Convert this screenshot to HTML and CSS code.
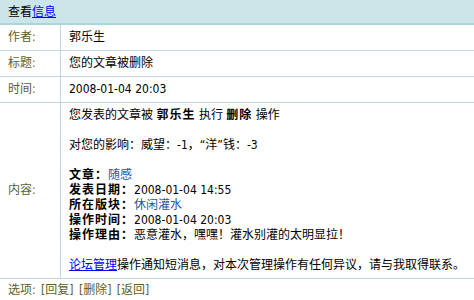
FILE: index.html
```html
<!DOCTYPE html>
<html lang="zh-CN">
<head>
<meta charset="utf-8">
<title>查看信息</title>
<link rel="stylesheet" href="styles.css">
</head>
<body>
<div class="box">
  <div class="head">查看<a href="#" class="lnk">信息</a></div>
  <table class="tbl">
    <tr>
      <td class="lab">作者:</td>
      <td class="val">郭乐生</td>
    </tr>
    <tr>
      <td class="lab">标题:</td>
      <td class="val">您的文章被删除</td>
    </tr>
    <tr>
      <td class="lab">时间:</td>
      <td class="val">2008-01-04 20:03</td>
    </tr>
    <tr>
      <td class="lab">内容:</td>
      <td class="val msg">您发表的文章被 <b>郭乐生</b> 执行 <b>删除</b> 操作<br><br>对您的影响：威望：-1，“洋”钱：-3<br><br><b>文章：</b><a href="#" class="ref">随感</a><br><b>发表日期：</b>2008-01-04 14:55<br><b>所在版块：</b><a href="#" class="ref">休闲灌水</a><br><b>操作时间：</b>2008-01-04 20:03<br><b>操作理由：</b>恶意灌水，嘿嘿！灌水别灌的太明显拉！<br><br><a href="#" class="lnk">论坛管理</a>操作通知短消息，对本次管理操作有任何异议，请与我取得联系。</td>
    </tr>
  </table>
  <div class="opts">选项: <a href="#" class="opt">[回复]</a> <a href="#" class="opt">[删除]</a> <a href="#" class="opt">[返回]</a></div>
</div>
</body>
</html>
```

FILE: styles.css
```css
html, body {
  margin: 0;
  padding: 0;
  background: #ffffff;
}

body {
  font-family: "DejaVu Sans Condensed", "DejaVu Sans", "Noto Sans CJK SC", sans-serif;
  font-stretch: condensed;
  font-size: 12px;
  color: #000000;
}

.box {
  width: 474px;
}

.head {
  height: 21px;
  padding: 2px 0 0 8px;
  line-height: 21px;
  background: #cce5e9;
  border-bottom: 2px solid #a7d7d9;
}

.lnk {
  color: #0000ff;
  text-decoration: underline;
}

.tbl {
  width: 100%;
  border-collapse: collapse;
  border-spacing: 0;
}

.tbl td {
  padding: 0 8px;
  border-bottom: 1px solid #c2d6e2;
  line-height: 15px;
}

.tbl b {
  letter-spacing: 1px;
}

.lab {
  width: 44px;
  height: 25px;
  color: #5b602c;
  border-right: 1px solid #c2d6e2;
  vertical-align: middle;
}

.val {
  height: 25px;
  vertical-align: middle;
}

.tbl td.msg {
  padding-top: 5px;
  padding-bottom: 5px;
  height: auto;
}

.ref {
  color: #2457a6;
  text-decoration: none;
}

.opts {
  padding: 4px 0 0 8px;
  line-height: 15px;
  color: #5b602c;
}

.opt {
  margin-left: 2px;
  color: #5b602c;
  text-decoration: none;
}
```
